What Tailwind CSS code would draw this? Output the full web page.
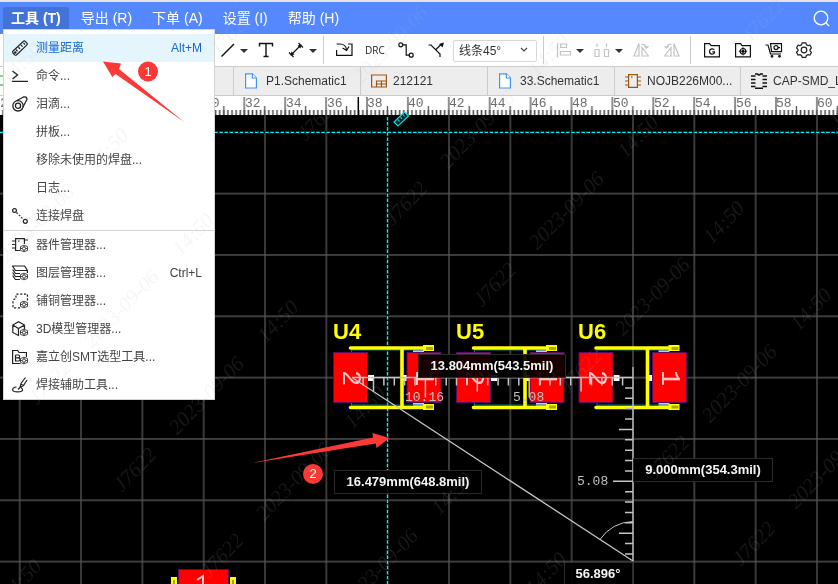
<!DOCTYPE html>
<html lang="zh-CN">
<head>
<meta charset="utf-8">
<title>PCB</title>
<script src="https://cdn.jsdelivr.net/npm/@tailwindcss/browser@4"></script>
</head>
<body class="font-['Liberation_Sans','Noto_Sans_CJK_SC',sans-serif]">
<svg class="hidden">
  <defs>
    <g id="cog" fill="#fff" stroke="#333" stroke-width=".9"><path d="M8.500 9.600 12 8.200l3.500 1.400v3.800L12 14.800l-3.500-1.400z"/><path d="M8.500 11.500h7M12 8.500v6"/><circle cx="12" cy="11.500" r="1.600"/></g>
  </defs>
</svg>
<div class="relative flex h-screen flex-col overflow-hidden bg-white text-[#333]">

  <header class="flex h-[34px] shrink-0 items-end border-t-2 border-[#e4e4e4] bg-[#5588ff] pl-[3px] pr-2 text-sm text-white">
    <nav class="flex flex-1 gap-1 self-stretch pt-[5px]">
      <button class="h-[27px] rounded-t-xs bg-[#4373d8] px-2 pb-[5px] font-bold leading-5 whitespace-nowrap">工具 (T)</button>
      <button class="h-[27px] px-2 pb-[5px] leading-5 whitespace-nowrap">导出 (R)</button>
      <button class="h-[27px] px-2 pb-[5px] leading-5 whitespace-nowrap">下单 (A)</button>
      <button class="h-[27px] px-2 pb-[5px] leading-5 whitespace-nowrap">设置 (I)</button>
      <button class="h-[27px] px-2 pb-[5px] leading-5 whitespace-nowrap">帮助 (H)</button>
    </nav>
    <button class="self-center" aria-label="搜索"><svg width="17" height="17" viewBox="0 0 17 17" fill="none" stroke="#fff" stroke-width="1.3"><circle cx="8" cy="8" r="6.800"/><path d="M12.800 12.800 16 16"/></svg></button>
  </header>

  <div class="flex h-8 shrink-0 items-center overflow-hidden bg-white pl-[220px]">
    <button class="shrink-0" aria-label="线条"><svg width="16" height="16" fill="none" stroke="#111" stroke-width="1.500"><path d="M1.500 14.500 14 2"/></svg></button>
    <button class="ml-1 shrink-0" aria-label="线条选项"><svg width="8" height="16"><path d="M0 7h8L4 11z" fill="#333"/></svg></button>
    <button class="ml-[10px] shrink-0" aria-label="文本"><svg width="16" height="16" fill="none" stroke="#111" stroke-width="1.400"><path d="M1.500 4.500V1.500h13v3M8 1.500v13M5.500 14.500h5"/></svg></button>
    <button class="ml-[14px] shrink-0" aria-label="尺寸"><svg width="16" height="16" fill="none" stroke="#111" stroke-width="1.200"><path d="m3.500 12.500 9-9M1 10.500l4.500 4.500M10.500 1l4.500 4.500"/><path d="m2.500 13.500 1-4 3 3zM13.500 2.500l-1 4-3-3z" fill="#111" stroke="none"/></svg></button>
    <button class="ml-[5px] shrink-0" aria-label="尺寸选项"><svg width="8" height="16"><path d="M0 7h8L4 11z" fill="#333"/></svg></button>
    <span class="ml-[6px] h-7 w-px shrink-0 bg-[#ccc]"></span>
    <button class="ml-3 shrink-0" aria-label="导入"><svg width="17" height="16" fill="none" stroke="#111" stroke-width="1.200"><path d="M.600 2h3.500c3 0 6 2 6.500 6M6.500 6l4.100 2.500L13 4.500M12 2h4v11.400H.600V8"/></svg></button>
    <button class="ml-[12px] w-5 shrink-0" aria-label="DRC"><svg width="20" height="16"><text x="0" y="12" font-size="10" font-family="Open Sans, sans-serif" fill="#222">DRC</text></svg></button>
    <button class="ml-[13px] shrink-0" aria-label="布线"><svg width="16" height="16" fill="none" stroke="#111" stroke-width="1.200"><circle cx="2.800" cy="2.800" r="2"/><circle cx="13.200" cy="13.200" r="2"/><path d="M4.800 2.800h3.400v10.400h3"/></svg></button>
    <button class="ml-[14px] shrink-0" aria-label="优化布线"><svg width="16" height="16" fill="none" stroke="#111" stroke-width="1.200"><path d="M.500 3h2.500l9 9v3M7.500 8l6-6"/><path d="m16 .400-1.500 5-3.500-3.500z" fill="#111" stroke="none"/></svg></button>
    <label class="relative ml-[9px] shrink-0"><span class="sr-only">线条角度</span>
      <select class="h-[22px] w-[84px] appearance-none rounded-xs border border-[#d5d8df] bg-white pl-[5px] text-xs text-[#333]"><option>线条45°</option></select>
      <svg class="pointer-events-none absolute top-[8px] right-[9px]" width="8" height="8" fill="none" stroke="#444" stroke-width="1.200"><path d="m1 2 3 3 3-3"/></svg>
    </label>
    <span class="ml-[6px] h-7 w-px shrink-0 bg-[#ccc]"></span>
    <button class="ml-3 shrink-0" aria-label="对齐"><svg width="16" height="16" fill="none" stroke="#c4c4c4" stroke-width="1.200"><path d="M1.500 1v14.500M4.500 2h6v3.500h-6zM4.500 9.500h10V13h-10z"/></svg></button>
    <button class="ml-1 shrink-0" aria-label="对齐选项"><svg width="8" height="16"><path d="M0 7h8L4 11z" fill="#333"/></svg></button>
    <button class="ml-[10px] shrink-0" aria-label="分布"><svg width="16" height="16" fill="none" stroke="#c4c4c4" stroke-width="1.200"><path d="M1 7.500h4v7H1zM10.500 7.500h4v7h-4zM3 1.500V5M12.500 1.500V5"/></svg></button>
    <button class="ml-[5px] shrink-0" aria-label="分布选项"><svg width="8" height="16"><path d="M0 7h8L4 11z" fill="#333"/></svg></button>
    <button class="ml-[10px] shrink-0" aria-label="左旋转"><svg width="16" height="16" fill="none" stroke="#c4c4c4" stroke-width="1.200"><path d="M6 1.500V14H1zM9 5.500V14h6.500zM8.500 2.500c3-.5 4.500.5 5 3.500M15.500 4l-2 2.200-2-1.800"/></svg></button>
    <button class="ml-[15px] shrink-0" aria-label="右旋转"><svg width="16" height="16" fill="none" stroke="#c4c4c4" stroke-width="1.200"><path d="M10 1.500V14h5zM7 5.500V14H.500zM7.500 2.500c-3-.5-4.500.5-5 3.500M.500 4l2 2.200 2-1.800"/></svg></button>
    <span class="ml-[10px] h-7 w-px shrink-0 bg-[#ccc]"></span>
    <button class="ml-[13px] shrink-0" aria-label="Gerber"><svg width="16" height="16" fill="none" stroke="#111" stroke-width="1.200"><path d="M.600 14.800V1.600h5l1.500 2h8.300v11.200z"/><path d="M10.300 8C9.500 6.200 5.500 6.400 5.500 9.500s4 3.300 5 1.200V9.800H8.300"/></svg></button>
    <button class="ml-[15px] shrink-0" aria-label="坐标文件"><svg width="16" height="16" fill="none" stroke="#111" stroke-width="1.200"><path d="M.600 14.800V1.600h5l1.500 2h8.300v11.200z"/><circle cx="8" cy="9.300" r="2.800"/><path d="M8 5v8.500M3.800 9.300h8.400" stroke-width=".8"/><circle cx="8" cy="9.300" r=".9" fill="#111"/></svg></button>
    <button class="ml-[14px] shrink-0" aria-label="下单"><svg width="18" height="16" fill="none" stroke="#111" stroke-width="1.200"><path d="M.500 3h2.500l2.500 9H16M5.500 1.600h11v8h-10z"/><circle cx="11" cy="5.600" r="2"/><path d="M13 5.600h2"/><circle cx="7" cy="14.300" r=".8" fill="#111"/><circle cx="14.500" cy="14.300" r=".8" fill="#111"/></svg></button>
    <button class="ml-[13px] shrink-0" aria-label="设置"><svg width="16" height="16" fill="none" stroke="#222" stroke-width="1.200"><path d="M6.200.800h3.600l.7 2 1.500.8 2-.4 1.400 2.800L14 7.500v1.300l1.400 1.500-1.500 2.700-2-.3-1.500.8-.7 1.900H6.200l-.7-1.900-1.500-.8-2 .3-1.400-2.700L2 8.700V7.400L.600 6 2 3.200l2 .4 1.500-.8z"/><circle cx="8" cy="8" r="2.800"/></svg></button>
  </div>

  <div class="flex h-[30px] shrink-0 overflow-hidden border-y border-[#ccc] bg-[#ededed] text-xs whitespace-nowrap text-[#333]">
    <button class="w-[106px] shrink-0 border-r border-[#ccc] bg-white" aria-label="标签"><svg width="10" height="16"><path d="M0 3h10M0 12h10" stroke="#1a9a1a"/></svg></button>
    <button class="w-32 shrink-0 border-r border-[#ccc]" aria-label="标签"></button>
    <button class="flex w-[127px] shrink-0 items-center gap-[6px] border-r border-[#ccc] pl-[10px]"><svg width="16" height="16" fill="#fff" stroke="#3d96f5" stroke-width="1.200"><path d="M1.600.800h6.800l4 4.200v10H1.600z"/><path d="M8.400.800V5h4"/></svg>P1.Schematic1</button>
    <button class="flex w-[127px] shrink-0 items-center gap-[6px] border-r border-[#ccc] pl-[10px]"><svg width="16" height="16" fill="none" stroke="#a3540f" stroke-width="1.200"><path d="M.600 2h14.800v12H.600zM5.500 13.500V8h9.500M5.500 11h9.500M10.500 8v5.500"/></svg>212121</button>
    <button class="flex w-[127px] shrink-0 items-center gap-[6px] border-r border-[#ccc] pl-[10px]"><svg width="16" height="16" fill="#fff" stroke="#3d96f5" stroke-width="1.200"><path d="M1.600.800h6.800l4 4.200v10H1.600z"/><path d="M8.400.800V5h4"/></svg>33.Schematic1</button>
    <button class="flex w-[126px] shrink-0 items-center gap-[6px] border-r border-[#ccc] pl-[10px]"><svg width="16" height="16" fill="none" stroke="#a3540f" stroke-width="1.200"><path d="M3.600 1.600h8.800v12.800H3.600zM0 4h3.600M0 8h3.600M0 12h3.600M12.400 4H16M12.400 8H16M12.400 12H16"/><path d="M6 4h1.500" stroke="#333"/></svg>NOJB226M00...</button>
    <button class="flex w-[127px] shrink-0 items-center gap-[6px] pl-[10px]"><svg width="16" height="16" fill="none" stroke="#111" stroke-width="1.600"><path d="M0 3h4.500M0 6.500h4.500M0 10h4.500M0 13.500h4.500M11.500 3H16M11.500 6.500H16M11.500 10H16M11.500 13.500H16"/><path d="M4 1h2.500q1.500 2 3 0H12M4 15.200h8"/></svg>CAP-SMD_L</button>
  </div>

  <svg class="h-[19px] w-full shrink-0" aria-label="标尺">
    <defs>
      <pattern id="minor" x="242.250" y="0" width="4.090" height="19" patternUnits="userSpaceOnUse"><path d="M2.050 14v5" stroke="#444" stroke-width="1.500"/></pattern>
      <pattern id="major" x="243.300" y="0" width="40.900" height="19" patternUnits="userSpaceOnUse"><path d="M1 1v18M21.450 10v9" stroke="#555" stroke-width="1.300"/></pattern>
    </defs>
    <rect width="100%" height="19" fill="#fff"/>
    <rect width="100%" height="19" fill="url(#minor)"/>
    <rect width="100%" height="19" fill="url(#major)"/>
    <path d="M358.300 1v18" stroke="#000" stroke-width="1.500"/>
    <g font-family="Liberation Mono, monospace" font-size="13" fill="#6c6c6c">
      <text x="0" y="11">20</text><text x="204" y="11">30</text><text x="245" y="11">32</text><text x="286" y="11">34</text><text x="327" y="11">36</text><text x="367" y="11">38</text><text x="408" y="11">40</text><text x="449" y="11">42</text><text x="490" y="11">44</text><text x="531" y="11">46</text><text x="572" y="11">48</text><text x="613" y="11">50</text><text x="654" y="11">52</text><text x="695" y="11">54</text><text x="736" y="11">56</text><text x="776" y="11">58</text><text x="817" y="11">60</text>
    </g>
  </svg>

  <main class="relative min-h-0 flex-1 bg-black">
    <svg class="block h-full w-full overflow-visible" aria-label="PCB 画布">
      <defs>
        <pattern id="grid" x="-10.970" y="-13.370" width="61.330" height="61.330" patternUnits="userSpaceOnUse"><path d="M30.670 0v61.330M0 30.670h61.330" stroke="#777" stroke-opacity=".68" stroke-width="1.400"/></pattern>
        <g id="part">
          <g fill="#c8c8d8"><rect x="413" y="350" width="11" height="4"/><rect x="413" y="402" width="11" height="4"/><rect x="368" y="375" width="6" height="6" fill="#fff"/><rect x="402" y="375" width="6" height="6" fill="#fff"/></g>
          <path d="M351.500 350v3M351.500 403v3M352 350h72M352 405h72" stroke="#087878" stroke-width="1"/>
          <g fill="#f00" stroke="#5b0a63"><rect x="333.500" y="352.500" width="34" height="50"/><rect x="407" y="352.500" width="34" height="50"/></g>
          <g font-family="Liberation Mono, monospace" font-size="27" fill="#ffc4c4" text-anchor="middle"><text transform="translate(343 378) rotate(90)">2</text><text transform="translate(416 378) rotate(90)">1</text></g>
          <path d="M350.500 348H432M350.500 407.500H432M402 348v59.500" fill="none" stroke="#ff0" stroke-width="3.600" stroke-linecap="round"/>
          <g fill="#ff0"><rect x="423" y="345" width="11" height="6"/><rect x="423" y="404" width="11" height="6"/></g>
          <g fill="#a8a800"><rect x="426" y="347" width="7" height="3"/><rect x="426" y="405.500" width="7" height="3"/></g>
        </g>
      </defs>
      <rect width="100%" height="100%" fill="url(#grid)"/>
      <!-- board coordinates -->
      <g transform="translate(0 -115)">
        <path d="M0 132.300H4000M387.500 115V4000" stroke="#000" stroke-width="2"/>
        <path d="M0 132.300H4000M387.500 117V4000" stroke="#00f0f0" stroke-width="1.300" stroke-dasharray="3.500 1.600"/>
        <g fill="#022" stroke="#00e0e0" stroke-width="1.200"><path d="m394 122 10.500-10 4 4-10.500 10z"/><path d="m398 119.500 1.500 2M400.500 117l1.500 2M403 114.500l1.500 2"/></g>
        <use href="#part"/><use href="#part" x="123"/><use href="#part" x="245.500"/>
        <g font-weight="bold" font-size="22" fill="#ff0" font-family="Liberation Sans, sans-serif"><text x="333" y="339">U4</text><text x="456" y="339">U5</text><text x="578" y="339">U6</text></g>

        <rect x="178.500" y="569.500" width="50" height="34" fill="#f00" stroke="#5b0a63"/>
        <g fill="#ff0"><rect x="171" y="577" width="6" height="20"/><rect x="230" y="577" width="6" height="20"/></g>
        <path d="M174 580v10M233 580v10" stroke="#a8a800" stroke-width="2"/>
        <path d="m197 580 6-4v12" fill="none" stroke="#ffc4c4" stroke-width="2"/>

        <g stroke="#c4c4c4" stroke-width="1.300" fill="none">
          <path d="M352 377.500H633M633 367v194M352 377.500 633 561"/>
          <path stroke-width="1.500" d="M622.600 377.500v8M612.200 377.500v8M601.900 377.500v8M591.500 377.500v8M581.100 377.500v14M570.700 377.500v8M560.300 377.500v8M550 377.500v8M539.600 377.500v8M529.200 377.500v20M518.800 377.500v8M508.400 377.500v8M498.100 377.500v8M487.700 377.500v8M477.300 377.500v14M466.900 377.500v8M456.500 377.500v8M446.200 377.500v8M435.800 377.500v8M425.400 377.500v20M415 377.500v8M404.600 377.500v8M394.300 377.500v8M383.900 377.500v8M373.500 377.500v14M363.100 377.500v8"/>
          <path stroke-width="1.500" d="M633 387.900h-8M633 398.300h-8M633 408.600h-8M633 419h-8M633 429.400h-14M633 439.800h-8M633 450.200h-8M633 460.500h-8M633 470.900h-8M633 481.300h-20M633 491.700h-8M633 502.100h-8M633 512.400h-8M633 522.800h-8M633 533.200h-14M633 543.600h-8M633 554h-8"/>
          <path d="M600 539.500A40 40 0 0 1 633 521.500" stroke-width="1"/>
        </g>
        <g font-family="Liberation Mono, monospace" font-size="13" fill="#c0c0c0"><text x="405" y="401">10.16</text><text x="513" y="401">5.08</text><text x="577" y="485">5.08</text></g>

        <g fill="#000" fill-opacity=".9" stroke="#2a2a2a"><rect x="418.500" y="354.500" width="147" height="23"/><rect x="334.500" y="470.500" width="147" height="23"/><rect x="633.500" y="458.500" width="139" height="23"/><rect x="564.500" y="562.500" width="68" height="23"/></g>
        <g font-weight="bold" font-size="13" fill="#f4f4f4" text-anchor="middle" font-family="Liberation Sans, sans-serif"><text x="492" y="370">13.804mm(543.5mil)</text><text x="408" y="486">16.479mm(648.8mil)</text><text x="703" y="474">9.000mm(354.3mil)</text><text x="598" y="578">56.896°</text></g>
      </g>
    </svg>
  </main>

  <div role="menu" class="absolute top-[29px] left-[3px] w-[212px] border border-[#d4d4d4] bg-white pt-1 text-xs text-[#444]">
    <button class="flex h-7 w-full items-center gap-2 bg-[#e5f5fe] pr-3 pl-2 text-[#1766d6]"><svg width="16" height="16" fill="none" stroke="#222" stroke-width="1.200"><path d="M1 11 11.500 1.200q1-.6 2 .4l1.500 1.600q.7 1-.3 2L4.500 15q-1 .6-1.800-.2L1 13q-.8-1 0-2z"/><path d="m4 9.500 1.500 1.800M6.500 7.200 8 9M9 5l1.500 1.700M11.500 3 13 4.500"/><circle cx="3.300" cy="12.500" r=".7"/></svg><span>测量距离</span><span class="ml-auto">Alt+M</span></button>
    <button class="flex h-7 w-full items-center gap-2 pr-3 pl-2"><svg width="16" height="16" fill="none" stroke="#222" stroke-width="1.400"><path d="m.500 3 5 4-5 4M0 13.400h16"/></svg><span>命令...</span></button>
    <button class="flex h-7 w-full items-center gap-2 pr-3 pl-2"><svg width="16" height="16" fill="none" stroke="#222" stroke-width="1.300"><circle cx="6" cy="9.800" r="5.200"/><circle cx="6" cy="9.800" r="2.600"/><path d="M4.500 4.800 11.500 1q3-.8 3.500 2.200L11 11"/></svg><span>泪滴...</span></button>
    <button class="flex h-7 w-full items-center pr-3 pl-8"><span>拼板...</span></button>
    <button class="flex h-7 w-full items-center pr-3 pl-8"><span>移除未使用的焊盘...</span></button>
    <button class="flex h-7 w-full items-center pr-3 pl-8"><span>日志...</span></button>
    <button class="flex h-7 w-full items-center gap-2 pr-3 pl-2"><svg width="16" height="16" fill="none" stroke="#222" stroke-width="1.200"><circle cx="2.500" cy="2.500" r="1.900"/><circle cx="13.300" cy="13.300" r="2"/><path d="m4.500 4.500 7 7" stroke-dasharray="1.800 1.500"/></svg><span>连接焊盘</span></button>
    <div class="h-px bg-[#d4d4d4]"></div>
    <button class="flex h-7 w-full items-center gap-2 pr-3 pl-2"><svg width="16" height="16" fill="none" stroke="#222" stroke-width="1.200"><path d="M8 13.500H3.600V1.600h8.800V7M0 4h3.600M0 7.500h3.600M0 11h3.600M12.400 3H16M6 4h1.500"/><use href="#cog"/></svg><span>器件管理器...</span></button>
    <button class="flex h-7 w-full items-center gap-2 pr-3 pl-2"><svg width="16" height="16" fill="none" stroke="#222" stroke-width="1.200"><path d="M.600 1h12l2.800 4.500h-12zM.600 4.500l2.800 4H8M.600 7.500l2.800 4H8M.600 10.500l2.800 4H8M15.400 5.500V8"/><use href="#cog"/></svg><span>图层管理器...</span><span class="ml-auto">Ctrl+L</span></button>
    <button class="flex h-7 w-full items-center gap-2 pr-3 pl-2"><svg width="16" height="16" fill="none" stroke="#222" stroke-width="1.200"><path d="M8 14.800H1V7l3-1.500V1.200h11.400V8" stroke-dasharray="2.200 1.600"/><use href="#cog"/></svg><span>铺铜管理器...</span></button>
    <button class="flex h-7 w-full items-center gap-2 pr-3 pl-2"><svg width="16" height="16" fill="none" stroke="#222" stroke-width="1.200"><path d="M7 14.800.800 11.500V4L6.500.800 12.500 4v4M.800 4l5.700 3.500L12.500 4M6.500 7.500v7"/><use href="#cog"/></svg><span>3D模型管理器...</span></button>
    <button class="flex h-7 w-full items-center gap-2 pr-3 pl-2"><svg width="16" height="16" fill="none" stroke="#222" stroke-width="1.200"><path d="M8.500 14.500H.600V1.500h5l1.500 2h7.300V8M3.500 6v6h2.800q1.700-.2 1.700-1.600T6.300 8.900H3.500M6.300 8.900q1.400-.2 1.400-1.500T6.200 6H3.500"/><use href="#cog"/></svg><span>嘉立创SMT选型工具...</span></button>
    <button class="flex h-7 w-full items-center gap-2 pr-3 pl-2"><svg width="16" height="16" fill="none" stroke="#222" stroke-width="1.200"><path d="M13.500.500 9 6.500l-1 4 3.500-2L15 3M8.800 7l2.500 1.500M8 10.500l-2 2"/><path d="M4.500 10C2 10.200.600 11.500.600 13c0 2.500 10 2.500 10 0 0-1-.6-1.600-1.600-2.200"/></svg><span>焊接辅助工具...</span></button>
  </div>

  <svg class="pointer-events-none absolute inset-0 h-full w-full mix-blend-screen" aria-hidden="true">
    <defs>
      <g id="mark"><g transform="rotate(-46)"><text x="-103" y="6">J7622</text><text y="6">2023-09-06</text><text x="103" y="6">14:50</text></g></g>
      <g id="marks" font-family="Liberation Serif, serif" font-style="italic" font-size="21" text-anchor="middle">
        <use href="#mark" x="-50" y="138"/><use href="#mark" x="37" y="224"/><use href="#mark" x="122" y="309"/><use href="#mark" x="207" y="396"/><use href="#mark" x="294" y="482"/><use href="#mark" x="381" y="568"/><use href="#mark" x="475" y="648"/>
        <use href="#mark" x="303" y="-40"/><use href="#mark" x="391" y="45"/><use href="#mark" x="478" y="130"/><use href="#mark" x="567" y="211"/><use href="#mark" x="653" y="297"/><use href="#mark" x="740" y="384"/><use href="#mark" x="826" y="470"/>
        <use href="#mark" x="835" y="-53"/><use href="#mark" x="922" y="33"/><use href="#mark" x="-50" y="655"/>
      </g>
    </defs>
    <use href="#marks" fill="#191919"/>
  </svg>
  <svg class="pointer-events-none absolute inset-0 h-full w-full" aria-hidden="true">
    <use href="#marks" fill="#000" fill-opacity=".04"/>
    <g fill="#fb3a36">
      <path d="m103 61.500 18 2-2 5.500 65.500 53.300L115.600 74l-3.300 3z"/>
      <path d="M253 462.800 373 437.500l-.6-4.500L389.500 438l-13 10-.8-4.500z"/>
      <circle cx="148" cy="71.500" r="10"/><circle cx="313" cy="474" r="10"/>
    </g>
    <g fill="#fff" font-family="Liberation Sans, sans-serif" font-size="13" text-anchor="middle"><text x="148" y="76">1</text><text x="313" y="478">2</text></g>
  </svg>
</div>
</body>
</html>
